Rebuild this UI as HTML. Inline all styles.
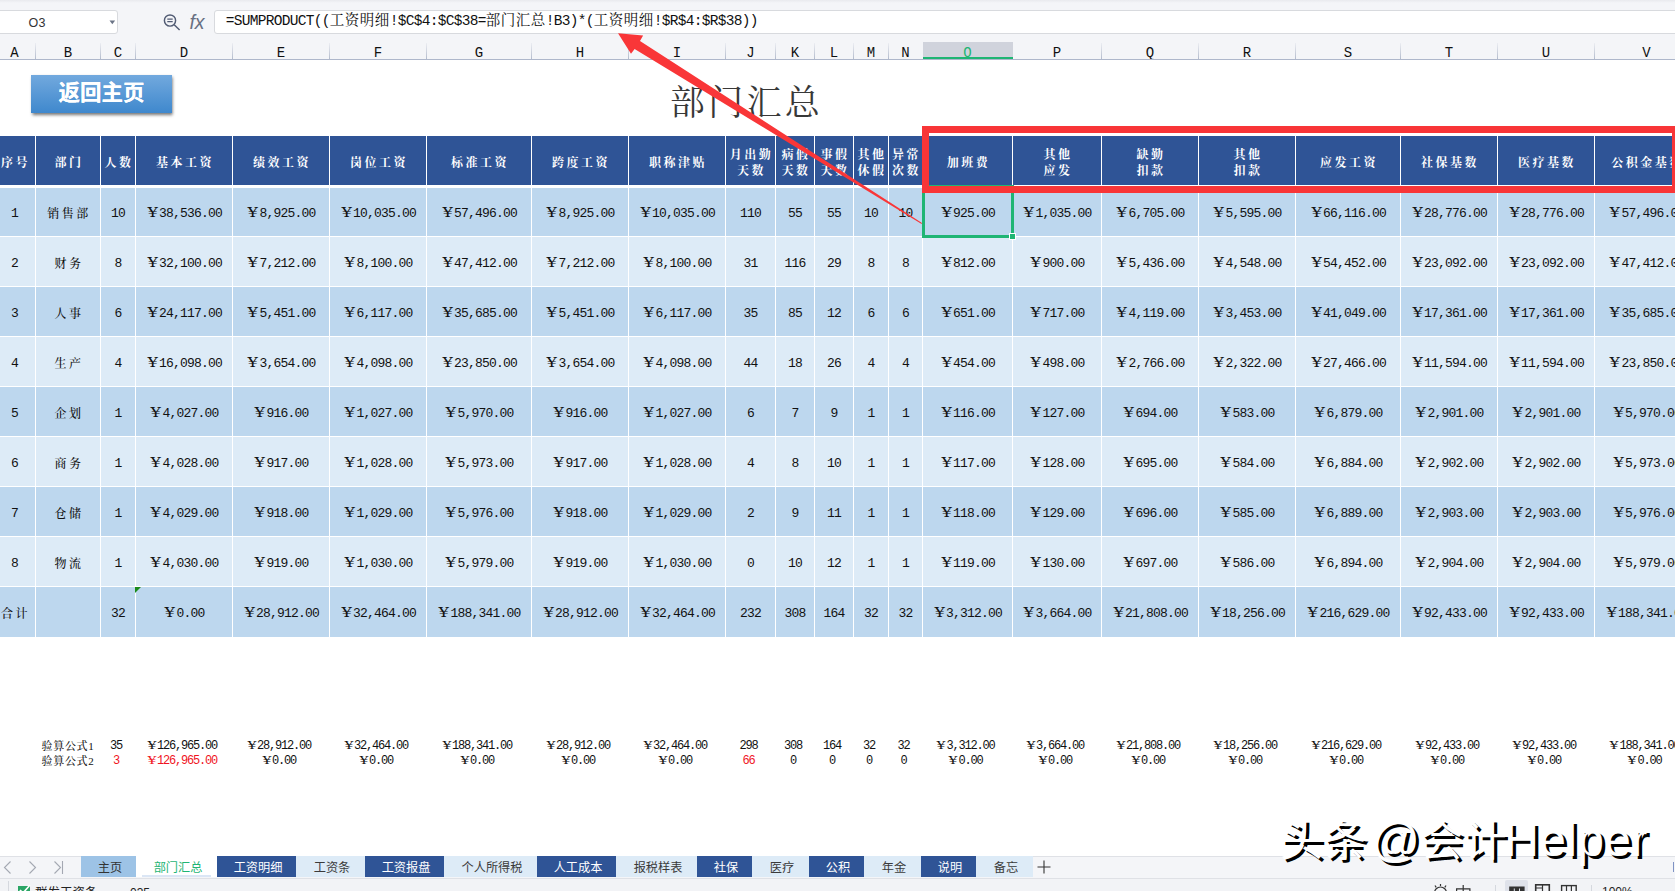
<!DOCTYPE html>
<html lang="zh-CN"><head><meta charset="utf-8"><title>部门汇总</title>
<style>
html,body{margin:0;padding:0}
body{width:1675px;height:891px;overflow:hidden;position:relative;background:#fff;font-family:"Liberation Sans","Noto Sans CJK SC",sans-serif;color:#000}
div,span{box-sizing:border-box}
.abs>div,.abs>span,.abs>svg{position:absolute}
#top{left:0;top:0;width:1675px;height:60px;background:#f4f5f8}
#topshade{left:0;top:0;width:1675px;height:3px;background:linear-gradient(#e9eaee,#f4f5f8)}
#namebox{left:-4px;top:10px;width:122px;height:24px;background:#fff;border:1px solid #d8dade;border-radius:3px}
#nametxt{left:28.500px;top:15px;font:12.5px/16px "Liberation Sans",sans-serif;color:#333;letter-spacing:.3px}
#fbox{left:214px;top:10px;width:1470px;height:24px;background:#fff;border:1px solid #d8dade;border-radius:3px}
#ftxt{left:225.7px;top:8px;height:22px;white-space:nowrap;font:14.5px/22px "Liberation Mono","Noto Serif CJK SC",monospace;letter-spacing:-.7px;color:#111}
#ftxt span{letter-spacing:.5px;font:14.5px/22px "Noto Serif CJK SC",serif}
.ch{top:44.7px;height:15px;text-align:center;font:14px/17px "Liberation Mono",monospace;color:#111}
.cs{top:43px;width:1px;height:16px;background:linear-gradient(rgba(185,192,207,.15),#b4bccd)}
#chline{left:0;top:59px;width:1675px;height:1px;background:#aeb7cb}
#osel{left:923px;top:42px;width:90px;height:17px;background:#d0d3dc;border-bottom:2px solid #1fb574}
#btn{left:31px;top:75px;width:141px;height:38px;background:linear-gradient(#72a9de,#3f88cd);box-shadow:.5px 2px 3px rgba(0,0,0,.55);color:#fff;text-shadow:0 0 .6px #fff;text-align:center;font:bold 21.5px/36px "Liberation Sans","Noto Sans CJK SC",sans-serif}
#title{left:601.500px;top:76.7px;width:290px;text-align:center;white-space:nowrap;font:35px/54px "Liberation Serif","Noto Serif CJK SC",serif;letter-spacing:3.3px;color:#383838}
#hband{left:0;top:136px;width:1675px;height:49px;background:#2f5496}
.b1{left:0;width:1675px;background:#bdd7ee}
.b2{left:0;width:1675px;background:#ddebf7}
.vs{top:136px;width:1px;height:501px;background:#fff}
.h{top:136px;height:49px;color:#fff;text-align:center;white-space:nowrap;font:bold 12px/16px "Liberation Serif","Noto Serif CJK SC",serif;letter-spacing:2.5px;display:flex;align-items:center;justify-content:center;padding-left:2px;padding-top:4px}
.c{text-align:center;white-space:nowrap;padding-top:2px;font:13px/48px "Liberation Mono","Noto Serif CJK SC",monospace;letter-spacing:-.8px;color:#111;overflow:hidden}
.z{font:500 12px/48px "Liberation Serif","Noto Serif CJK SC",serif;letter-spacing:2.5px;padding-left:2px}
.k{text-align:center;white-space:nowrap;font:12px/15px "Liberation Mono","Noto Serif CJK SC",monospace;letter-spacing:-1.2px;color:#111;height:15px;padding-right:4px}
.kz{font:500 11px/15px "Liberation Serif","Noto Serif CJK SC",serif;letter-spacing:.7px;padding-right:0}
.y{display:inline-block;width:13.2px;text-align:center;letter-spacing:0;font:12.4px/1 "DejaVu Serif",serif;transform:scaleX(1.32)}
.k .y{width:10px;font-size:10.6px}
.r{color:#f0141e}
#redbox{left:922px;top:126px;width:757px;height:67px;border:7px solid #f83537}
#gsel{left:922px;top:185px;width:92px;height:53px;border:2px solid #1fb574;border-width:1px 3px 3px 3px}
#ghand{left:1009px;top:233px;width:7px;height:7px;background:#1fb574;border:1px solid #fff}
#tabbar{left:0;top:856px;width:1675px;height:22px;background:#f4f5f8;border-top:1px solid #dfe1e6}
#status{left:0;top:878px;width:1675px;height:13px;background:#f2f3f6;border-top:1px solid #dfe1e6}
.t{top:856px;height:21px;padding-left:3px;text-align:center;white-space:nowrap;font:12.2px/24.4px "Liberation Sans","Noto Sans CJK SC",sans-serif}
.td{background:#2f5496;color:#fff}
.tl{background:#ddebf7;color:#3a3a3a}
.tm{background:#9dc3e6;color:#333}
.ta{background:#fff;color:#1fb574}
#wm{left:1279.7px;top:808px;word-spacing:-4.7px;white-space:nowrap;font:43.5px/64px "Liberation Sans","Noto Sans CJK SC",sans-serif;color:#fff;text-shadow:3.2px 3px .4px #000}
#wm .wa{font-size:48px;margin-left:-3px}
#wm .wl{font-size:48px;margin-left:-2.5px;letter-spacing:.3px}
.st{top:881px;font:13px/16px "Liberation Sans","Noto Sans CJK SC",sans-serif;color:#222;white-space:nowrap}

</style></head><body class="abs">
<div id="top"></div><div id="topshade"></div>
<div id="namebox"></div><div id="nametxt">O3</div>
<svg style="left:109px;top:20px" width="7" height="5" viewBox="0 0 7 5"><path d="M0.500 0.500h5.600L3.300 4.200z" fill="#6b7486"/></svg>
<svg style="left:162px;top:13px" width="20" height="18" viewBox="0 0 20 18"><circle cx="8" cy="7.5" r="5.6" fill="none" stroke="#515b73" stroke-width="1.45"/><path d="M12.2 11.8L17.600 17" stroke="#515b73" stroke-width="1.45" fill="none"/><path d="M5.3 6.2h5.4M5.3 8.7h5.4" stroke="#515b73" stroke-width="1.25" fill="none"/></svg>
<div style="left:189.500px;top:10.500px;font:italic 19.500px/22px 'Liberation Sans',sans-serif;color:#687082;letter-spacing:-.2px">fx</div>
<div id="fbox"></div>
<div id="ftxt">=SUMPRODUCT((<span>工资明细</span>!$C$4:$C$38=<span>部门汇总</span>!B3)*(<span>工资明细</span>!$R$4:$R$38))</div>
<div id="osel"></div>
<div class="ch" style="left:-6px;width:41px">A</div>
<div class="ch" style="left:36px;width:64px">B</div>
<div class="ch" style="left:101px;width:34px">C</div>
<div class="ch" style="left:136px;width:96px">D</div>
<div class="ch" style="left:233px;width:96px">E</div>
<div class="ch" style="left:330px;width:96px">F</div>
<div class="ch" style="left:427px;width:104px">G</div>
<div class="ch" style="left:532px;width:96px">H</div>
<div class="ch" style="left:629px;width:96px">I</div>
<div class="ch" style="left:726px;width:49px">J</div>
<div class="ch" style="left:776px;width:38px">K</div>
<div class="ch" style="left:815px;width:38px">L</div>
<div class="ch" style="left:854px;width:34px">M</div>
<div class="ch" style="left:889px;width:33px">N</div>
<div class="ch" style="left:923px;width:89px;color:#1fb574">O</div>
<div class="ch" style="left:1013px;width:88px">P</div>
<div class="ch" style="left:1102px;width:96px">Q</div>
<div class="ch" style="left:1199px;width:96px">R</div>
<div class="ch" style="left:1296px;width:104px">S</div>
<div class="ch" style="left:1401px;width:96px">T</div>
<div class="ch" style="left:1498px;width:96px">U</div>
<div class="ch" style="left:1595px;width:103px">V</div>
<div class="cs" style="left:35px"></div>
<div class="cs" style="left:100px"></div>
<div class="cs" style="left:135px"></div>
<div class="cs" style="left:232px"></div>
<div class="cs" style="left:329px"></div>
<div class="cs" style="left:426px"></div>
<div class="cs" style="left:531px"></div>
<div class="cs" style="left:628px"></div>
<div class="cs" style="left:725px"></div>
<div class="cs" style="left:775px"></div>
<div class="cs" style="left:814px"></div>
<div class="cs" style="left:853px"></div>
<div class="cs" style="left:888px"></div>
<div class="cs" style="left:1101px"></div>
<div class="cs" style="left:1198px"></div>
<div class="cs" style="left:1295px"></div>
<div class="cs" style="left:1400px"></div>
<div class="cs" style="left:1497px"></div>
<div class="cs" style="left:1594px"></div>
<div id="chline"></div>
<div style="left:923px;top:57px;width:90px;height:2px;background:#1fb574"></div>
<div id="btn">返回主页</div>
<div id="title">部门汇总</div>
<div id="hband"></div>
<div class="b1" style="top:188px;height:48px"></div>
<div class="b2" style="top:237px;height:49px"></div>
<div class="b1" style="top:287px;height:49px"></div>
<div class="b2" style="top:337px;height:49px"></div>
<div class="b1" style="top:387px;height:49px"></div>
<div class="b2" style="top:437px;height:49px"></div>
<div class="b1" style="top:487px;height:49px"></div>
<div class="b2" style="top:537px;height:49px"></div>
<div class="b1" style="top:587px;height:50px"></div>
<div class="vs" style="left:35px"></div>
<div class="vs" style="left:100px"></div>
<div class="vs" style="left:135px"></div>
<div class="vs" style="left:232px"></div>
<div class="vs" style="left:329px"></div>
<div class="vs" style="left:426px"></div>
<div class="vs" style="left:531px"></div>
<div class="vs" style="left:628px"></div>
<div class="vs" style="left:725px"></div>
<div class="vs" style="left:775px"></div>
<div class="vs" style="left:814px"></div>
<div class="vs" style="left:853px"></div>
<div class="vs" style="left:888px"></div>
<div class="vs" style="left:922px"></div>
<div class="vs" style="left:1012px"></div>
<div class="vs" style="left:1101px"></div>
<div class="vs" style="left:1198px"></div>
<div class="vs" style="left:1295px"></div>
<div class="vs" style="left:1400px"></div>
<div class="vs" style="left:1497px"></div>
<div class="vs" style="left:1594px"></div>
<div class="h" style="left:-6px;width:41px"><div style="position:static">序号</div></div>
<div class="h" style="left:36px;width:64px"><div style="position:static">部门</div></div>
<div class="h" style="left:101px;width:34px"><div style="position:static">人数</div></div>
<div class="h" style="left:136px;width:96px"><div style="position:static">基本工资</div></div>
<div class="h" style="left:233px;width:96px"><div style="position:static">绩效工资</div></div>
<div class="h" style="left:330px;width:96px"><div style="position:static">岗位工资</div></div>
<div class="h" style="left:427px;width:104px"><div style="position:static">标准工资</div></div>
<div class="h" style="left:532px;width:96px"><div style="position:static">跨度工资</div></div>
<div class="h" style="left:629px;width:96px"><div style="position:static">职称津贴</div></div>
<div class="h" style="left:726px;width:49px"><div style="position:static">月出勤<br>天数</div></div>
<div class="h" style="left:776px;width:38px"><div style="position:static">病假<br>天数</div></div>
<div class="h" style="left:815px;width:38px"><div style="position:static">事假<br>天数</div></div>
<div class="h" style="left:854px;width:34px"><div style="position:static">其他<br>休假</div></div>
<div class="h" style="left:889px;width:33px"><div style="position:static">异常<br>次数</div></div>
<div class="h" style="left:923px;width:89px"><div style="position:static">加班费</div></div>
<div class="h" style="left:1013px;width:88px"><div style="position:static">其他<br>应发</div></div>
<div class="h" style="left:1102px;width:96px"><div style="position:static">缺勤<br>扣款</div></div>
<div class="h" style="left:1199px;width:96px"><div style="position:static">其他<br>扣款</div></div>
<div class="h" style="left:1296px;width:104px"><div style="position:static">应发工资</div></div>
<div class="h" style="left:1401px;width:96px"><div style="position:static">社保基数</div></div>
<div class="h" style="left:1498px;width:96px"><div style="position:static">医疗基数</div></div>
<div class="h" style="left:1595px;width:103px"><div style="position:static">公积金基数</div></div>
<div class="c" style="left:-6px;top:188px;width:41px;height:48px">1</div>
<div class="c z" style="left:36px;top:188px;width:64px;height:48px">销售部</div>
<div class="c" style="left:101px;top:188px;width:34px;height:48px">10</div>
<div class="c" style="left:136px;top:188px;width:96px;height:48px"><span class="y">¥</span>38,536.00</div>
<div class="c" style="left:233px;top:188px;width:96px;height:48px"><span class="y">¥</span>8,925.00</div>
<div class="c" style="left:330px;top:188px;width:96px;height:48px"><span class="y">¥</span>10,035.00</div>
<div class="c" style="left:427px;top:188px;width:104px;height:48px"><span class="y">¥</span>57,496.00</div>
<div class="c" style="left:532px;top:188px;width:96px;height:48px"><span class="y">¥</span>8,925.00</div>
<div class="c" style="left:629px;top:188px;width:96px;height:48px"><span class="y">¥</span>10,035.00</div>
<div class="c" style="left:726px;top:188px;width:49px;height:48px">110</div>
<div class="c" style="left:776px;top:188px;width:38px;height:48px">55</div>
<div class="c" style="left:815px;top:188px;width:38px;height:48px">55</div>
<div class="c" style="left:854px;top:188px;width:34px;height:48px">10</div>
<div class="c" style="left:889px;top:188px;width:33px;height:48px">10</div>
<div class="c" style="left:923px;top:188px;width:89px;height:48px"><span class="y">¥</span>925.00</div>
<div class="c" style="left:1013px;top:188px;width:88px;height:48px"><span class="y">¥</span>1,035.00</div>
<div class="c" style="left:1102px;top:188px;width:96px;height:48px"><span class="y">¥</span>6,705.00</div>
<div class="c" style="left:1199px;top:188px;width:96px;height:48px"><span class="y">¥</span>5,595.00</div>
<div class="c" style="left:1296px;top:188px;width:104px;height:48px"><span class="y">¥</span>66,116.00</div>
<div class="c" style="left:1401px;top:188px;width:96px;height:48px"><span class="y">¥</span>28,776.00</div>
<div class="c" style="left:1498px;top:188px;width:96px;height:48px"><span class="y">¥</span>28,776.00</div>
<div class="c" style="left:1595px;top:188px;width:103px;height:48px"><span class="y">¥</span>57,496.00</div>
<div class="c" style="left:-6px;top:238px;width:41px;height:48px">2</div>
<div class="c z" style="left:36px;top:238px;width:64px;height:48px">财务</div>
<div class="c" style="left:101px;top:238px;width:34px;height:48px">8</div>
<div class="c" style="left:136px;top:238px;width:96px;height:48px"><span class="y">¥</span>32,100.00</div>
<div class="c" style="left:233px;top:238px;width:96px;height:48px"><span class="y">¥</span>7,212.00</div>
<div class="c" style="left:330px;top:238px;width:96px;height:48px"><span class="y">¥</span>8,100.00</div>
<div class="c" style="left:427px;top:238px;width:104px;height:48px"><span class="y">¥</span>47,412.00</div>
<div class="c" style="left:532px;top:238px;width:96px;height:48px"><span class="y">¥</span>7,212.00</div>
<div class="c" style="left:629px;top:238px;width:96px;height:48px"><span class="y">¥</span>8,100.00</div>
<div class="c" style="left:726px;top:238px;width:49px;height:48px">31</div>
<div class="c" style="left:776px;top:238px;width:38px;height:48px">116</div>
<div class="c" style="left:815px;top:238px;width:38px;height:48px">29</div>
<div class="c" style="left:854px;top:238px;width:34px;height:48px">8</div>
<div class="c" style="left:889px;top:238px;width:33px;height:48px">8</div>
<div class="c" style="left:923px;top:238px;width:89px;height:48px"><span class="y">¥</span>812.00</div>
<div class="c" style="left:1013px;top:238px;width:88px;height:48px"><span class="y">¥</span>900.00</div>
<div class="c" style="left:1102px;top:238px;width:96px;height:48px"><span class="y">¥</span>5,436.00</div>
<div class="c" style="left:1199px;top:238px;width:96px;height:48px"><span class="y">¥</span>4,548.00</div>
<div class="c" style="left:1296px;top:238px;width:104px;height:48px"><span class="y">¥</span>54,452.00</div>
<div class="c" style="left:1401px;top:238px;width:96px;height:48px"><span class="y">¥</span>23,092.00</div>
<div class="c" style="left:1498px;top:238px;width:96px;height:48px"><span class="y">¥</span>23,092.00</div>
<div class="c" style="left:1595px;top:238px;width:103px;height:48px"><span class="y">¥</span>47,412.00</div>
<div class="c" style="left:-6px;top:288px;width:41px;height:48px">3</div>
<div class="c z" style="left:36px;top:288px;width:64px;height:48px">人事</div>
<div class="c" style="left:101px;top:288px;width:34px;height:48px">6</div>
<div class="c" style="left:136px;top:288px;width:96px;height:48px"><span class="y">¥</span>24,117.00</div>
<div class="c" style="left:233px;top:288px;width:96px;height:48px"><span class="y">¥</span>5,451.00</div>
<div class="c" style="left:330px;top:288px;width:96px;height:48px"><span class="y">¥</span>6,117.00</div>
<div class="c" style="left:427px;top:288px;width:104px;height:48px"><span class="y">¥</span>35,685.00</div>
<div class="c" style="left:532px;top:288px;width:96px;height:48px"><span class="y">¥</span>5,451.00</div>
<div class="c" style="left:629px;top:288px;width:96px;height:48px"><span class="y">¥</span>6,117.00</div>
<div class="c" style="left:726px;top:288px;width:49px;height:48px">35</div>
<div class="c" style="left:776px;top:288px;width:38px;height:48px">85</div>
<div class="c" style="left:815px;top:288px;width:38px;height:48px">12</div>
<div class="c" style="left:854px;top:288px;width:34px;height:48px">6</div>
<div class="c" style="left:889px;top:288px;width:33px;height:48px">6</div>
<div class="c" style="left:923px;top:288px;width:89px;height:48px"><span class="y">¥</span>651.00</div>
<div class="c" style="left:1013px;top:288px;width:88px;height:48px"><span class="y">¥</span>717.00</div>
<div class="c" style="left:1102px;top:288px;width:96px;height:48px"><span class="y">¥</span>4,119.00</div>
<div class="c" style="left:1199px;top:288px;width:96px;height:48px"><span class="y">¥</span>3,453.00</div>
<div class="c" style="left:1296px;top:288px;width:104px;height:48px"><span class="y">¥</span>41,049.00</div>
<div class="c" style="left:1401px;top:288px;width:96px;height:48px"><span class="y">¥</span>17,361.00</div>
<div class="c" style="left:1498px;top:288px;width:96px;height:48px"><span class="y">¥</span>17,361.00</div>
<div class="c" style="left:1595px;top:288px;width:103px;height:48px"><span class="y">¥</span>35,685.00</div>
<div class="c" style="left:-6px;top:338px;width:41px;height:48px">4</div>
<div class="c z" style="left:36px;top:338px;width:64px;height:48px">生产</div>
<div class="c" style="left:101px;top:338px;width:34px;height:48px">4</div>
<div class="c" style="left:136px;top:338px;width:96px;height:48px"><span class="y">¥</span>16,098.00</div>
<div class="c" style="left:233px;top:338px;width:96px;height:48px"><span class="y">¥</span>3,654.00</div>
<div class="c" style="left:330px;top:338px;width:96px;height:48px"><span class="y">¥</span>4,098.00</div>
<div class="c" style="left:427px;top:338px;width:104px;height:48px"><span class="y">¥</span>23,850.00</div>
<div class="c" style="left:532px;top:338px;width:96px;height:48px"><span class="y">¥</span>3,654.00</div>
<div class="c" style="left:629px;top:338px;width:96px;height:48px"><span class="y">¥</span>4,098.00</div>
<div class="c" style="left:726px;top:338px;width:49px;height:48px">44</div>
<div class="c" style="left:776px;top:338px;width:38px;height:48px">18</div>
<div class="c" style="left:815px;top:338px;width:38px;height:48px">26</div>
<div class="c" style="left:854px;top:338px;width:34px;height:48px">4</div>
<div class="c" style="left:889px;top:338px;width:33px;height:48px">4</div>
<div class="c" style="left:923px;top:338px;width:89px;height:48px"><span class="y">¥</span>454.00</div>
<div class="c" style="left:1013px;top:338px;width:88px;height:48px"><span class="y">¥</span>498.00</div>
<div class="c" style="left:1102px;top:338px;width:96px;height:48px"><span class="y">¥</span>2,766.00</div>
<div class="c" style="left:1199px;top:338px;width:96px;height:48px"><span class="y">¥</span>2,322.00</div>
<div class="c" style="left:1296px;top:338px;width:104px;height:48px"><span class="y">¥</span>27,466.00</div>
<div class="c" style="left:1401px;top:338px;width:96px;height:48px"><span class="y">¥</span>11,594.00</div>
<div class="c" style="left:1498px;top:338px;width:96px;height:48px"><span class="y">¥</span>11,594.00</div>
<div class="c" style="left:1595px;top:338px;width:103px;height:48px"><span class="y">¥</span>23,850.00</div>
<div class="c" style="left:-6px;top:388px;width:41px;height:48px">5</div>
<div class="c z" style="left:36px;top:388px;width:64px;height:48px">企划</div>
<div class="c" style="left:101px;top:388px;width:34px;height:48px">1</div>
<div class="c" style="left:136px;top:388px;width:96px;height:48px"><span class="y">¥</span>4,027.00</div>
<div class="c" style="left:233px;top:388px;width:96px;height:48px"><span class="y">¥</span>916.00</div>
<div class="c" style="left:330px;top:388px;width:96px;height:48px"><span class="y">¥</span>1,027.00</div>
<div class="c" style="left:427px;top:388px;width:104px;height:48px"><span class="y">¥</span>5,970.00</div>
<div class="c" style="left:532px;top:388px;width:96px;height:48px"><span class="y">¥</span>916.00</div>
<div class="c" style="left:629px;top:388px;width:96px;height:48px"><span class="y">¥</span>1,027.00</div>
<div class="c" style="left:726px;top:388px;width:49px;height:48px">6</div>
<div class="c" style="left:776px;top:388px;width:38px;height:48px">7</div>
<div class="c" style="left:815px;top:388px;width:38px;height:48px">9</div>
<div class="c" style="left:854px;top:388px;width:34px;height:48px">1</div>
<div class="c" style="left:889px;top:388px;width:33px;height:48px">1</div>
<div class="c" style="left:923px;top:388px;width:89px;height:48px"><span class="y">¥</span>116.00</div>
<div class="c" style="left:1013px;top:388px;width:88px;height:48px"><span class="y">¥</span>127.00</div>
<div class="c" style="left:1102px;top:388px;width:96px;height:48px"><span class="y">¥</span>694.00</div>
<div class="c" style="left:1199px;top:388px;width:96px;height:48px"><span class="y">¥</span>583.00</div>
<div class="c" style="left:1296px;top:388px;width:104px;height:48px"><span class="y">¥</span>6,879.00</div>
<div class="c" style="left:1401px;top:388px;width:96px;height:48px"><span class="y">¥</span>2,901.00</div>
<div class="c" style="left:1498px;top:388px;width:96px;height:48px"><span class="y">¥</span>2,901.00</div>
<div class="c" style="left:1595px;top:388px;width:103px;height:48px"><span class="y">¥</span>5,970.00</div>
<div class="c" style="left:-6px;top:438px;width:41px;height:48px">6</div>
<div class="c z" style="left:36px;top:438px;width:64px;height:48px">商务</div>
<div class="c" style="left:101px;top:438px;width:34px;height:48px">1</div>
<div class="c" style="left:136px;top:438px;width:96px;height:48px"><span class="y">¥</span>4,028.00</div>
<div class="c" style="left:233px;top:438px;width:96px;height:48px"><span class="y">¥</span>917.00</div>
<div class="c" style="left:330px;top:438px;width:96px;height:48px"><span class="y">¥</span>1,028.00</div>
<div class="c" style="left:427px;top:438px;width:104px;height:48px"><span class="y">¥</span>5,973.00</div>
<div class="c" style="left:532px;top:438px;width:96px;height:48px"><span class="y">¥</span>917.00</div>
<div class="c" style="left:629px;top:438px;width:96px;height:48px"><span class="y">¥</span>1,028.00</div>
<div class="c" style="left:726px;top:438px;width:49px;height:48px">4</div>
<div class="c" style="left:776px;top:438px;width:38px;height:48px">8</div>
<div class="c" style="left:815px;top:438px;width:38px;height:48px">10</div>
<div class="c" style="left:854px;top:438px;width:34px;height:48px">1</div>
<div class="c" style="left:889px;top:438px;width:33px;height:48px">1</div>
<div class="c" style="left:923px;top:438px;width:89px;height:48px"><span class="y">¥</span>117.00</div>
<div class="c" style="left:1013px;top:438px;width:88px;height:48px"><span class="y">¥</span>128.00</div>
<div class="c" style="left:1102px;top:438px;width:96px;height:48px"><span class="y">¥</span>695.00</div>
<div class="c" style="left:1199px;top:438px;width:96px;height:48px"><span class="y">¥</span>584.00</div>
<div class="c" style="left:1296px;top:438px;width:104px;height:48px"><span class="y">¥</span>6,884.00</div>
<div class="c" style="left:1401px;top:438px;width:96px;height:48px"><span class="y">¥</span>2,902.00</div>
<div class="c" style="left:1498px;top:438px;width:96px;height:48px"><span class="y">¥</span>2,902.00</div>
<div class="c" style="left:1595px;top:438px;width:103px;height:48px"><span class="y">¥</span>5,973.00</div>
<div class="c" style="left:-6px;top:488px;width:41px;height:48px">7</div>
<div class="c z" style="left:36px;top:488px;width:64px;height:48px">仓储</div>
<div class="c" style="left:101px;top:488px;width:34px;height:48px">1</div>
<div class="c" style="left:136px;top:488px;width:96px;height:48px"><span class="y">¥</span>4,029.00</div>
<div class="c" style="left:233px;top:488px;width:96px;height:48px"><span class="y">¥</span>918.00</div>
<div class="c" style="left:330px;top:488px;width:96px;height:48px"><span class="y">¥</span>1,029.00</div>
<div class="c" style="left:427px;top:488px;width:104px;height:48px"><span class="y">¥</span>5,976.00</div>
<div class="c" style="left:532px;top:488px;width:96px;height:48px"><span class="y">¥</span>918.00</div>
<div class="c" style="left:629px;top:488px;width:96px;height:48px"><span class="y">¥</span>1,029.00</div>
<div class="c" style="left:726px;top:488px;width:49px;height:48px">2</div>
<div class="c" style="left:776px;top:488px;width:38px;height:48px">9</div>
<div class="c" style="left:815px;top:488px;width:38px;height:48px">11</div>
<div class="c" style="left:854px;top:488px;width:34px;height:48px">1</div>
<div class="c" style="left:889px;top:488px;width:33px;height:48px">1</div>
<div class="c" style="left:923px;top:488px;width:89px;height:48px"><span class="y">¥</span>118.00</div>
<div class="c" style="left:1013px;top:488px;width:88px;height:48px"><span class="y">¥</span>129.00</div>
<div class="c" style="left:1102px;top:488px;width:96px;height:48px"><span class="y">¥</span>696.00</div>
<div class="c" style="left:1199px;top:488px;width:96px;height:48px"><span class="y">¥</span>585.00</div>
<div class="c" style="left:1296px;top:488px;width:104px;height:48px"><span class="y">¥</span>6,889.00</div>
<div class="c" style="left:1401px;top:488px;width:96px;height:48px"><span class="y">¥</span>2,903.00</div>
<div class="c" style="left:1498px;top:488px;width:96px;height:48px"><span class="y">¥</span>2,903.00</div>
<div class="c" style="left:1595px;top:488px;width:103px;height:48px"><span class="y">¥</span>5,976.00</div>
<div class="c" style="left:-6px;top:538px;width:41px;height:48px">8</div>
<div class="c z" style="left:36px;top:538px;width:64px;height:48px">物流</div>
<div class="c" style="left:101px;top:538px;width:34px;height:48px">1</div>
<div class="c" style="left:136px;top:538px;width:96px;height:48px"><span class="y">¥</span>4,030.00</div>
<div class="c" style="left:233px;top:538px;width:96px;height:48px"><span class="y">¥</span>919.00</div>
<div class="c" style="left:330px;top:538px;width:96px;height:48px"><span class="y">¥</span>1,030.00</div>
<div class="c" style="left:427px;top:538px;width:104px;height:48px"><span class="y">¥</span>5,979.00</div>
<div class="c" style="left:532px;top:538px;width:96px;height:48px"><span class="y">¥</span>919.00</div>
<div class="c" style="left:629px;top:538px;width:96px;height:48px"><span class="y">¥</span>1,030.00</div>
<div class="c" style="left:726px;top:538px;width:49px;height:48px">0</div>
<div class="c" style="left:776px;top:538px;width:38px;height:48px">10</div>
<div class="c" style="left:815px;top:538px;width:38px;height:48px">12</div>
<div class="c" style="left:854px;top:538px;width:34px;height:48px">1</div>
<div class="c" style="left:889px;top:538px;width:33px;height:48px">1</div>
<div class="c" style="left:923px;top:538px;width:89px;height:48px"><span class="y">¥</span>119.00</div>
<div class="c" style="left:1013px;top:538px;width:88px;height:48px"><span class="y">¥</span>130.00</div>
<div class="c" style="left:1102px;top:538px;width:96px;height:48px"><span class="y">¥</span>697.00</div>
<div class="c" style="left:1199px;top:538px;width:96px;height:48px"><span class="y">¥</span>586.00</div>
<div class="c" style="left:1296px;top:538px;width:104px;height:48px"><span class="y">¥</span>6,894.00</div>
<div class="c" style="left:1401px;top:538px;width:96px;height:48px"><span class="y">¥</span>2,904.00</div>
<div class="c" style="left:1498px;top:538px;width:96px;height:48px"><span class="y">¥</span>2,904.00</div>
<div class="c" style="left:1595px;top:538px;width:103px;height:48px"><span class="y">¥</span>5,979.00</div>
<div class="c z" style="left:-6px;top:588px;width:41px;height:48px">合计</div>
<div class="c" style="left:101px;top:588px;width:34px;height:48px">32</div>
<div class="c" style="left:136px;top:588px;width:96px;height:48px"><span class="y">¥</span>0.00</div>
<div class="c" style="left:233px;top:588px;width:96px;height:48px"><span class="y">¥</span>28,912.00</div>
<div class="c" style="left:330px;top:588px;width:96px;height:48px"><span class="y">¥</span>32,464.00</div>
<div class="c" style="left:427px;top:588px;width:104px;height:48px"><span class="y">¥</span>188,341.00</div>
<div class="c" style="left:532px;top:588px;width:96px;height:48px"><span class="y">¥</span>28,912.00</div>
<div class="c" style="left:629px;top:588px;width:96px;height:48px"><span class="y">¥</span>32,464.00</div>
<div class="c" style="left:726px;top:588px;width:49px;height:48px">232</div>
<div class="c" style="left:776px;top:588px;width:38px;height:48px">308</div>
<div class="c" style="left:815px;top:588px;width:38px;height:48px">164</div>
<div class="c" style="left:854px;top:588px;width:34px;height:48px">32</div>
<div class="c" style="left:889px;top:588px;width:33px;height:48px">32</div>
<div class="c" style="left:923px;top:588px;width:89px;height:48px"><span class="y">¥</span>3,312.00</div>
<div class="c" style="left:1013px;top:588px;width:88px;height:48px"><span class="y">¥</span>3,664.00</div>
<div class="c" style="left:1102px;top:588px;width:96px;height:48px"><span class="y">¥</span>21,808.00</div>
<div class="c" style="left:1199px;top:588px;width:96px;height:48px"><span class="y">¥</span>18,256.00</div>
<div class="c" style="left:1296px;top:588px;width:104px;height:48px"><span class="y">¥</span>216,629.00</div>
<div class="c" style="left:1401px;top:588px;width:96px;height:48px"><span class="y">¥</span>92,433.00</div>
<div class="c" style="left:1498px;top:588px;width:96px;height:48px"><span class="y">¥</span>92,433.00</div>
<div class="c" style="left:1595px;top:588px;width:103px;height:48px"><span class="y">¥</span>188,341.00</div>
<svg style="left:135px;top:587px" width="6" height="6" viewBox="0 0 6 6"><path d="M0 0h6L0 6z" fill="#1a8a1a"/></svg>
<div class="k kz" style="left:36px;top:739px;width:64px">验算公式1</div>
<div class="k" style="left:101px;top:739px;width:34px">35</div>
<div class="k" style="left:136px;top:739px;width:96px"><span class="y">¥</span>126,965.00</div>
<div class="k" style="left:233px;top:739px;width:96px"><span class="y">¥</span>28,912.00</div>
<div class="k" style="left:330px;top:739px;width:96px"><span class="y">¥</span>32,464.00</div>
<div class="k" style="left:427px;top:739px;width:104px"><span class="y">¥</span>188,341.00</div>
<div class="k" style="left:532px;top:739px;width:96px"><span class="y">¥</span>28,912.00</div>
<div class="k" style="left:629px;top:739px;width:96px"><span class="y">¥</span>32,464.00</div>
<div class="k" style="left:726px;top:739px;width:49px">298</div>
<div class="k" style="left:776px;top:739px;width:38px">308</div>
<div class="k" style="left:815px;top:739px;width:38px">164</div>
<div class="k" style="left:854px;top:739px;width:34px">32</div>
<div class="k" style="left:889px;top:739px;width:33px">32</div>
<div class="k" style="left:923px;top:739px;width:89px"><span class="y">¥</span>3,312.00</div>
<div class="k" style="left:1013px;top:739px;width:88px"><span class="y">¥</span>3,664.00</div>
<div class="k" style="left:1102px;top:739px;width:96px"><span class="y">¥</span>21,808.00</div>
<div class="k" style="left:1199px;top:739px;width:96px"><span class="y">¥</span>18,256.00</div>
<div class="k" style="left:1296px;top:739px;width:104px"><span class="y">¥</span>216,629.00</div>
<div class="k" style="left:1401px;top:739px;width:96px"><span class="y">¥</span>92,433.00</div>
<div class="k" style="left:1498px;top:739px;width:96px"><span class="y">¥</span>92,433.00</div>
<div class="k" style="left:1595px;top:739px;width:103px"><span class="y">¥</span>188,341.00</div>
<div class="k kz" style="left:36px;top:754px;width:64px">验算公式2</div>
<div class="k r" style="left:101px;top:754px;width:34px">3</div>
<div class="k r" style="left:136px;top:754px;width:96px"><span class="y">¥</span>126,965.00</div>
<div class="k" style="left:233px;top:754px;width:96px"><span class="y">¥</span>0.00</div>
<div class="k" style="left:330px;top:754px;width:96px"><span class="y">¥</span>0.00</div>
<div class="k" style="left:427px;top:754px;width:104px"><span class="y">¥</span>0.00</div>
<div class="k" style="left:532px;top:754px;width:96px"><span class="y">¥</span>0.00</div>
<div class="k" style="left:629px;top:754px;width:96px"><span class="y">¥</span>0.00</div>
<div class="k r" style="left:726px;top:754px;width:49px">66</div>
<div class="k" style="left:776px;top:754px;width:38px">0</div>
<div class="k" style="left:815px;top:754px;width:38px">0</div>
<div class="k" style="left:854px;top:754px;width:34px">0</div>
<div class="k" style="left:889px;top:754px;width:33px">0</div>
<div class="k" style="left:923px;top:754px;width:89px"><span class="y">¥</span>0.00</div>
<div class="k" style="left:1013px;top:754px;width:88px"><span class="y">¥</span>0.00</div>
<div class="k" style="left:1102px;top:754px;width:96px"><span class="y">¥</span>0.00</div>
<div class="k" style="left:1199px;top:754px;width:96px"><span class="y">¥</span>0.00</div>
<div class="k" style="left:1296px;top:754px;width:104px"><span class="y">¥</span>0.00</div>
<div class="k" style="left:1401px;top:754px;width:96px"><span class="y">¥</span>0.00</div>
<div class="k" style="left:1498px;top:754px;width:96px"><span class="y">¥</span>0.00</div>
<div class="k" style="left:1595px;top:754px;width:103px"><span class="y">¥</span>0.00</div>
<div id="gsel"></div><div id="ghand"></div>
<div id="redbox"></div>
<svg style="left:0;top:0" width="1675" height="891" viewBox="0 0 1675 891"><path d="M618 33.2L643.1 35.5L640 41.1L922 223L921.600 223.900L634.6 48.9L631 53.7z" fill="#f93638"/></svg>
<div id="tabbar"></div><div id="status"></div>
<svg style="left:0;top:858px" width="80" height="18" viewBox="0 0 80 18"><g fill="none" stroke="#a4a8b2" stroke-width="1.1"><path d="M10.5 3.5L4.5 9.5L10.5 15.5"/><path d="M29.5 3.5L35.5 9.5L29.5 15.5"/><path d="M54.5 3.5L60.5 9.5L54.5 15.5"/><path d="M62.5 3v13"/></g></svg>
<div class="t tm" style="left:81px;width:55px">主页</div>
<div class="t ta" style="left:136px;width:81px">部门汇总</div>
<div class="t td" style="left:217px;width:79px">工资明细</div>
<div class="t tl" style="left:296px;width:69px">工资条</div>
<div class="t td" style="left:365px;width:79px">工资报盘</div>
<div class="t tl" style="left:444px;width:93px">个人所得税</div>
<div class="t td" style="left:537px;width:79px">人工成本</div>
<div class="t tl" style="left:616px;width:81px">报税样表</div>
<div class="t td" style="left:697px;width:55px">社保</div>
<div class="t tl" style="left:752px;width:57px">医疗</div>
<div class="t td" style="left:809px;width:55px">公积</div>
<div class="t tl" style="left:864px;width:57px">年金</div>
<div class="t td" style="left:921px;width:55px">说明</div>
<div class="t tl" style="left:976px;width:57px">备忘</div>
<div style="left:142px;top:875px;width:69px;height:2px;background:#dbe6f5"></div>
<svg style="left:1036px;top:859px" width="16" height="16" viewBox="0 0 16 16"><path d="M8 1.5v13M1.5 8h13" stroke="#333" stroke-width="1.1" fill="none"/></svg>
<div style="left:1673px;top:862px;width:1px;height:10px;background:#7f93c4"></div>
<div style="left:8px;top:881px;width:1px;height:10px;background:#d5d8de"></div>
<svg style="left:18px;top:884px" width="14" height="12" viewBox="0 0 14 12"><rect x="0" y="2" width="12" height="10" fill="#2aa565"/><path d="M2 6l3 3l7-8" stroke="#fff" stroke-width="1.6" fill="none"/></svg>
<div class="st" style="left:35px;top:885px;font-size:12.5px">群发工资条</div>
<div class="st" style="left:130px;top:885px;font-size:12px">035</div>
<div style="left:1505px;top:880px;width:23px;height:11px;background:#dfe2ea;border-radius:2px 2px 0 0"></div>
<svg style="left:1425px;top:880px" width="220" height="11" viewBox="0 0 220 11"><g fill="none" stroke="#333" stroke-width="1.2"><path d="M9.500 13a6 6 0 0 1 12 0M15.500 4v2M10 5.500l1.200 1.800M21 5.500l-1.200 1.800"/><path d="M31 8.800h14.500M38.200 5v6M31.600 8.800v3M44.900 8.800v3"/><rect x="110.700" y="4.800" width="13.600" height="10" stroke-width="1.600"/><path d="M117.500 4.800v7M111 8h6"/><rect x="136.600" y="5.600" width="14.600" height="10" stroke-width="1.400"/><path d="M141.500 5.500v6M146.400 5.500v6"/></g><path d="M84.200 6.500h15.400v5h-15.400z" fill="#333"/><path d="M89.300 8.500v3M94.500 8.500v3" stroke="#dfe2ea" stroke-width="1"/><path d="M70.500 5v6M166.500 5v6" stroke="#d5d8de" stroke-width="1"/></svg>
<div class="st" style="left:1602px;top:884px;font-size:12px">100%</div>
<div id="wm">头条 <span class="wa">@</span>会计<span class="wl">Helper</span></div>
</body></html>
